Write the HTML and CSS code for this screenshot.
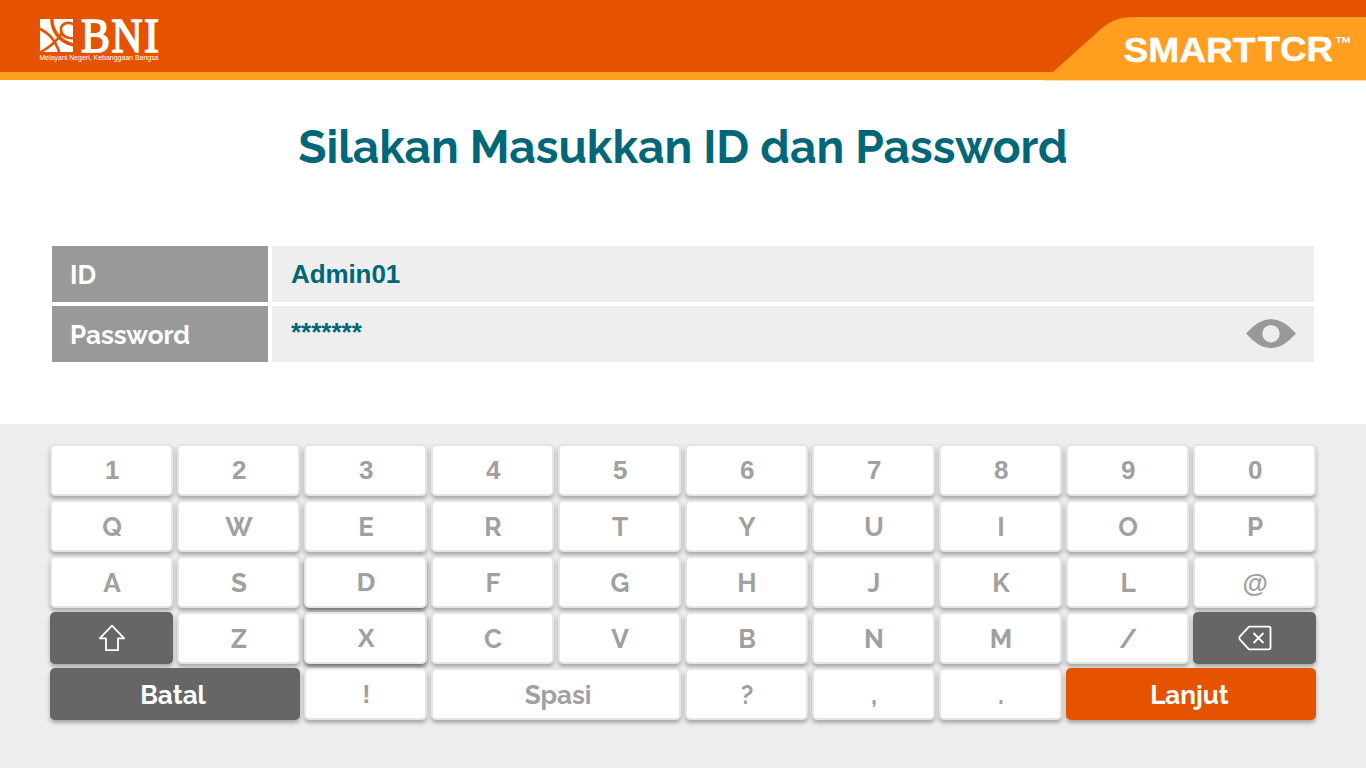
FILE: index.html
```html
<!DOCTYPE html>
<html lang="id">
<head>
<meta charset="utf-8">
<title>BNI SmartTCR</title>
<link rel="stylesheet" href="styles.css">
</head>
<body>
<div class="screen">
<header class="header">
  <svg class="brand" width="130" height="66" viewBox="36 4 130 66" role="img" aria-label="BNI">
    <rect x="40" y="19" width="33" height="33" fill="#fff"/>
    <g fill="none" stroke="#e55300">
      <path d="M51.800 18C51.500 30 59 42 74 45" stroke-width="3.400"/>
      <path d="M74 24.500C66 20.500 60.500 25 61 30C61.500 36 67 39 74 38" stroke-width="2.600"/>
      <path d="M39 28.500C50 33 56 42 59.500 53" stroke-width="2.600"/>
      <path d="M62 33C57 41 50 47 39.500 53" stroke-width="2.400"/>
    </g>
    <text class="bni" x="81" y="51.500" textLength="29" lengthAdjust="spacingAndGlyphs">B</text>
    <text class="bni" x="111.500" y="51.500" textLength="31" lengthAdjust="spacingAndGlyphs">N</text>
    <text class="bni" x="144" y="51.500" textLength="15" lengthAdjust="spacingAndGlyphs">I</text>
    <text class="tagline" x="39.500" y="60" textLength="119" lengthAdjust="spacingAndGlyphs">Melayani Negeri, Kebanggaan Bangsa</text>
  </svg>
  <svg class="product" width="322" height="65" viewBox="1044 17 322 65" role="img" aria-label="SMARTTCR">
    <path d="M1044 72H1053L1101 29Q1114 17 1132 17H1366V80H1044Z" fill="#ff9e1f"/>
    <path d="M1044 80H1366V81H1044Z" fill="#ffdcae"/>
    <text class="smart" x="1123.500" y="61.500" textLength="132" lengthAdjust="spacingAndGlyphs">SMART</text>
    <text class="smart" x="1257.500" y="61" textLength="75.500" lengthAdjust="spacingAndGlyphs">TCR</text>
    <text class="tm" x="1335.500" y="43" textLength="15" lengthAdjust="spacingAndGlyphs">TM</text>
  </svg>
</header>
<main class="main">
  <h1 class="title">Silakan Masukkan ID dan Password</h1>
  <div class="form">
    <div class="label">ID</div><div class="field">Admin01</div>
    <div class="label">Password</div>
    <div class="field masked"><span class="stars">*******</span>
      <svg width="52" height="32" viewBox="0 0 52 32"><path fill="#999" fill-rule="evenodd" d="M1 15.500Q14 1 26 1T51 15.500Q38 30.300 26 30.300T1 15.500ZM26 7A8.700 8.700 0 1 0 26 24.400A8.700 8.700 0 1 0 26 7Z"/></svg>
    </div>
  </div>
</main>
<section class="keyboard">
  <button class="key num">1</button><button class="key num">2</button><button class="key num">3</button><button class="key num">4</button><button class="key num">5</button><button class="key num">6</button><button class="key num">7</button><button class="key num">8</button><button class="key num">9</button><button class="key num">0</button>
  <button class="key">Q</button><button class="key">W</button><button class="key">E</button><button class="key">R</button><button class="key">T</button><button class="key">Y</button><button class="key">U</button><button class="key">I</button><button class="key">O</button><button class="key">P</button>
  <button class="key">A</button><button class="key">S</button><button class="key num raised">D</button><button class="key">F</button><button class="key">G</button><button class="key">H</button><button class="key">J</button><button class="key">K</button><button class="key">L</button><button class="key num at">@</button>
  <button class="key dark" aria-label="Shift"><svg width="28" height="28" viewBox="0 0 28 28"><path d="M14 1.700L26.200 14.300H20V26.200H8V14.300H1.800Z"/></svg></button>
  <button class="key">Z</button><button class="key num raised">X</button><button class="key">C</button><button class="key">V</button><button class="key">B</button><button class="key">N</button><button class="key">M</button><button class="key">/</button>
  <button class="key dark" aria-label="Hapus"><svg class="erase" width="34" height="26" viewBox="0 0 34 26"><path d="M11 1.700H31Q32.500 1.700 32.500 3.200V22.800Q32.500 24.300 31 24.300H11L1.800 14.300Q.8 13 1.800 11.700ZM15.500 8L25.500 18M25.500 8L15.500 18"/></svg></button>
  <button class="key wide dark back">Batal</button><button class="key num">!</button><button class="key wide space">Spasi</button><button class="key">?</button><button class="key">,</button><button class="key">.</button><button class="key wide next">Lanjut</button>
</section>
</div>
</body>
</html>
```
FILE: styles.css
```css
* { box-sizing: border-box; }
body { margin: 0; font-family: Raleway, Lato, sans-serif; }
.screen { width: 1366px; height: 768px; display: flex; flex-direction: column; background: #fff; overflow: hidden; }
.header { height: 80px; flex: none; display: flex; justify-content: space-between; align-items: flex-start; background: #e55300; border-bottom: 8px solid #ff9e1f; }
.brand { margin: 4px 0 0 36px; overflow: visible; }
.product { margin-top: 17px; flex: none; }
.brand text, .product text { fill: #fff; }
.brand .bni { font: 47.5px "Liberation Serif", serif; stroke: #fff; stroke-width: 1.7; }
.tagline { font: 7px "Liberation Sans", sans-serif; }
.smart { font: bold 35.5px "Liberation Sans", sans-serif; stroke: #fff; stroke-width: .5; }
.tm { font: bold 9.5px "Liberation Sans", sans-serif; }
.main { height: 344px; flex: none; display: flex; flex-direction: column; align-items: center; }
.title { margin: 35px 0 0; font-size: 46px; font-weight: 700; line-height: 64px; color: #006778; white-space: nowrap; }
.form { margin-top: 67px; display: grid; grid-template-columns: 216px 1042px; grid-auto-rows: 56px; gap: 4px; font-size: 26px; font-weight: bold; line-height: 56px; }
.label { background: #999; color: #fff; padding: 1px 0 0 18px; }
.field { background: #eee; color: #006778; padding-left: 19px; font-family: "Liberation Sans", Arial, sans-serif; letter-spacing: -.1px; }
.masked { display: flex; align-items: center; justify-content: space-between; padding-right: 17px; letter-spacing: 0; }
.stars { padding-bottom: 4px; line-height: 52px; }
.keyboard { flex: 1; display: grid; grid-template-columns: repeat(10, 123px); grid-auto-rows: 52px; gap: 4px; align-content: start; padding: 20px 50px; background: #eee; }
.key { display: flex; align-items: center; justify-content: center; padding: 2px 0 0 1px; border: 2px solid #e5e5e5; border-radius: 5px; background: #fff; color: #a0a0a0; font: bold 26px/48px Raleway, Lato, sans-serif; box-shadow: 0 3px 4px rgba(0, 0, 0, .3); }
.num { font-family: "Liberation Sans", Arial, sans-serif; padding: 0 0 0 1.5px; }
.at { padding-top: 2px; }
.raised { box-shadow: 0 3px 4px rgba(0, 0, 0, .55); }
.wide { grid-column: span 2; }
.dark { background: #666; border-color: #666; color: #fff; padding-left: 0; }
.dark svg { fill: none; stroke: #fff; stroke-width: 1.8; stroke-linejoin: round; margin-top: -2px; }
.dark .erase { margin-right: 0; }
.back { padding-right: 4px; }
.space { padding-left: 4px; }
.next { background: #e55300; border-color: #e55300; color: #fff; padding: 2px 3px 0 0; }
```
